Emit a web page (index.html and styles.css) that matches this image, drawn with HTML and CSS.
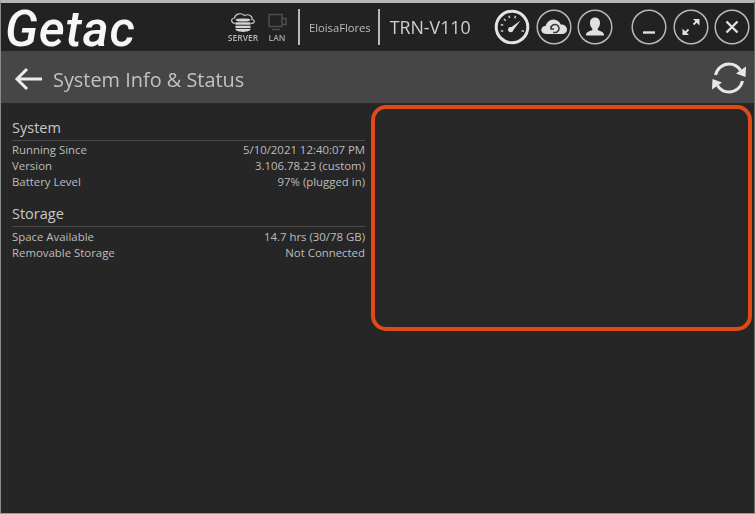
FILE: index.html
```html
<!DOCTYPE html>
<html lang="en">
<head>
<meta charset="utf-8">
<title>System Info &amp; Status</title>
<link rel="stylesheet" href="styles.css">
</head>
<body>
<div class="frame">
  <header class="topbar">
    <div class="logo">Getac</div>
    <div class="status">
      <div class="conn">
        <svg class="conn-icon" viewBox="0 0 28 20"><path class="cloud" d="M6.500 11 C2 11 1 6 5.500 5.500 C6.500 1 12.500 0 15.500 3 C19.500 1 24 3.500 23 7 C26.500 7.500 26 11 22 11"/><ellipse class="disc" cx="14" cy="7.500" rx="7.500" ry="1.600"/><rect class="disc" x="6.500" y="9.800" width="15" height="2.400"/><rect class="disc" x="6.500" y="13.200" width="15" height="2.400"/><path class="disc" d="M6.500 16.600h15c0 1.800-3.500 2.800-7.500 2.800s-7.500-1-7.500-2.800z"/></svg>
        <span class="conn-label">SERVER</span>
      </div>
      <div class="conn conn-off">
        <svg class="conn-icon" viewBox="0 0 28 20"><path class="lan" d="M6 2h13v12H6z M19 6h4v6h-4 M9 17h8"/></svg>
        <span class="conn-label">LAN</span>
      </div>
      <div class="sep"></div>
      <div class="user">EloisaFlores</div>
      <div class="sep"></div>
      <div class="device">TRN-V110</div>
    </div>
    <div class="actions">
      <svg class="round gauge" viewBox="0 0 36 36"><circle class="ring-thick" cx="18" cy="18" r="15.800"/><g class="ticks"><path d="M6.800 22h2.400M6.800 15.500l2.400.7M10 10l1.700 1.700M15 6.800l.6 2.300M21.500 7l-.7 2.300M30 22h-2.400"/></g><path class="needle" d="M15.600 19.600 L26.500 11.500 L18.200 22.400 Z"/><circle class="hub" cx="16.600" cy="20.600" r="2.600"/></svg>
      <svg class="round" viewBox="0 0 36 36"><circle class="ring" cx="18" cy="18" r="16.800"/><path class="fill" d="M10.500 25 C6.600 25 5 22.500 5.400 20.300 C5.800 18 7.800 16.800 9.700 17 C10.500 13.600 13.500 10.600 17.500 10.600 C21 10.600 23.600 12.800 24.700 15.600 C28 15.200 31 17.600 31 20.500 C31 23.300 28.800 25 26 25Z"/><path class="cut" d="M15 19.500a4 4 0 1 1 2.200 3.600 M15 17v3h3"/></svg>
      <svg class="round" viewBox="0 0 36 36"><circle class="ring" cx="18" cy="18" r="16.800"/><path class="fill" d="M18 8.500c3.300 0 5 2.400 5 5.400 0 2.400-1 4.300-2.300 5.600v1.600c2.300 1.200 6.300 1.500 6.300 5.400H9c0-3.900 4-4.200 6.300-5.400v-1.600C14 18.200 13 16.300 13 13.900c0-3 1.700-5.400 5-5.400z"/></svg>
      <div class="gap"></div>
      <svg class="round" viewBox="0 0 36 36"><circle class="ring" cx="18" cy="18" r="16.800"/><path class="glyph" d="M12 23.500h12"/></svg>
      <svg class="round" viewBox="0 0 36 36"><circle class="ring" cx="18" cy="18" r="16.800"/><path class="glyph-thin" d="M20.500 15.500l4.500-4.500M15.500 20.500l-4.500 4.500"/><path class="fill" d="M20 10h6.500v6.500zM16 26H9.500v-6.500z"/></svg>
      <svg class="round" viewBox="0 0 36 36"><circle class="ring" cx="18" cy="18" r="16.800"/><path class="glyph" d="M12.500 12.500l11 11M23.500 12.500l-11 11"/></svg>
    </div>
  </header>
  <div class="titlebar">
    <svg class="back" viewBox="0 0 30 24"><path d="M28 12H3M13 2L3 12l10 10"/></svg>
    <h1 class="title">System Info &amp; Status</h1>
    <svg class="refresh" viewBox="0 0 36 34"><path class="arc" d="M4.500 14C6 7.500 11.500 3 18 3c5 0 9 2.300 11.500 6.500"/><path class="head" d="M35 5.500L34.500 16l-9.500-3.500z"/><path class="arc" d="M31.500 20C30 26.500 24.500 31 18 31c-5 0-9-2.300-11.500-6.500"/><path class="head" d="M1 28.500L1.500 18l9.500 3.500z"/></svg>
  </div>
  <main class="content">
    <div class="info">
      <section class="group">
        <h2 class="group-title">System</h2>
        <div class="row"><span>Running Since</span><span>5/10/2021 12:40:07 PM</span></div>
        <div class="row"><span>Version</span><span>3.106.78.23 (custom)</span></div>
        <div class="row"><span>Battery Level</span><span>97% (plugged in)</span></div>
      </section>
      <section class="group">
        <h2 class="group-title">Storage</h2>
        <div class="row"><span>Space Available</span><span>14.7 hrs (30/78 GB)</span></div>
        <div class="row"><span>Removable Storage</span><span>Not Connected</span></div>
      </section>
    </div>
    <div class="highlight"></div>
  </main>
</div>
</body>
</html>
```
FILE: styles.css
```css
* { box-sizing: border-box; }
html, body { margin: 0; padding: 0; background: #262626; }
.frame {
  width: 755px;
  height: 514px;
  display: flex;
  flex-direction: column;
  border-top: 3px solid #b4b6b8;
  border-left: 1px solid #8a8a8a;
  border-bottom: 1px solid #9a9a9a;
  border-right: 1px solid #6a6a6a;
  font-family: "Open Sans", "Noto Sans", sans-serif;
  color: #c8c8c8;
  filter: blur(0.5px);
}
.topbar {
  height: 48px;
  background: #222222;
  display: flex;
  align-items: center;
  flex: none;
}
.logo {
  font-family: Roboto, "Liberation Sans", sans-serif;
  font-style: italic;
  font-weight: 500;
  font-size: 50px;
  letter-spacing: 0.800px;
  line-height: 44px;
  color: #f6f6f6;
  width: 225px;
  padding: 4px 0 0 4px;
}
.status { display: flex; align-items: center; width: 268px; }
.conn { display: flex; flex-direction: column; align-items: center; width: 34px; }
.conn-off { width: 24px; margin-left: 5px; margin-right: 9px; }
.conn-icon { width: 28px; height: 21px; margin-top: 1px; }
.cloud { fill: none; stroke: #c4c4c4; stroke-width: 1.200; }
.disc { fill: #d4d4d4; }
.lan { fill: none; stroke: #4c4c4c; stroke-width: 1.600; }
.conn-label { font-size: 8.500px; font-weight: 600; line-height: 10px; color: #b4b4b4; }
.conn-off .conn-label { color: #a8a8a8; }
.sep { width: 2px; height: 36px; background: #b8b8b8; flex: none; }
.user { font-size: 11.200px; color: #bdbdbd; padding: 0 7px 0 9px; }
.device { font-size: 17.800px; color: #cfcfcf; padding-left: 10px; white-space: nowrap; }
.actions { display: flex; align-items: center; gap: 5.500px; margin-top: -1px; }
.round { width: 36px; height: 36px; flex: none; }
.gap { width: 7px; }
.ring { fill: none; stroke: #b8b8b8; stroke-width: 1.500; }
.ring-thick { fill: none; stroke: #e4e4e4; stroke-width: 3; }
.ticks path { fill: none; stroke: #c8c8c8; stroke-width: 1.600; }
.needle, .hub { fill: #e4e4e4; }
.fill { fill: #e0e0e0; }
.cut { fill: none; stroke: #3a3a3a; stroke-width: 1.600; }
.glyph { fill: none; stroke: #e0e0e0; stroke-width: 2.400; }
.glyph-thin { fill: none; stroke: #e0e0e0; stroke-width: 1.800; }
.titlebar {
  height: 52px;
  background: #464646;
  display: flex;
  align-items: center;
  padding: 4px 7px 0 13px;
  flex: none;
}
.back { width: 30px; height: 24px; flex: none; }
.back path { fill: none; stroke: #ececec; stroke-width: 3; }
.title {
  margin: 0 0 0 9px;
  font-size: 19.900px;
  font-weight: 400;
  color: #c2c2c2;
  flex: 1;
}
.refresh { width: 36px; height: 34px; flex: none; margin-top: -3px; }
.arc { fill: none; stroke: #e8e8e8; stroke-width: 3; }
.head { fill: #e8e8e8; }
.content {
  flex: 1;
  background: #262626;
  display: flex;
  align-items: flex-start;
  padding: 2px 3px 0 11px;
}
.info { width: 353px; padding-top: 11px; flex: none; }
.group { margin-bottom: 12px; }
.group-title {
  margin: 0 0 1px;
  font-size: 14.500px;
  font-weight: 400;
  line-height: 24px;
  color: #c8c8c8;
  border-bottom: 1px solid #4a4a4a;
}
.group + .group .group-title { margin-bottom: 2px; }
.row {
  display: flex;
  justify-content: space-between;
  font-size: 11.400px;
  line-height: 16px;
  color: #bdbdbd;
}
.highlight {
  width: 381px;
  height: 226px;
  margin-left: 6px;
  border: 4px solid #df4a18;
  border-radius: 15px;
  background: #272727;
  flex: none;
}
```
